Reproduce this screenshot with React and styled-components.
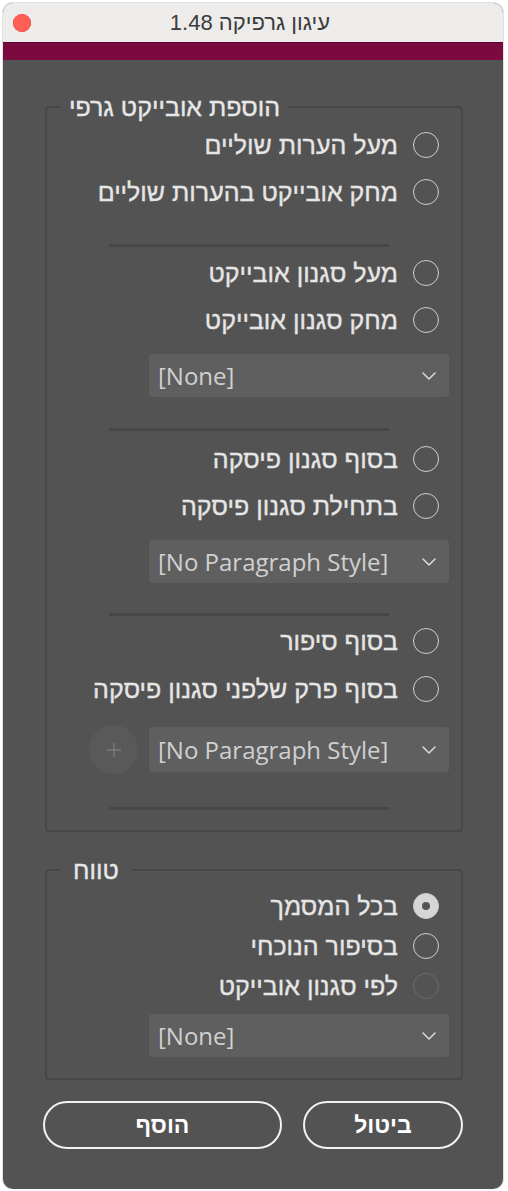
import styled, { createGlobalStyle } from "styled-components";

const GlobalStyle = createGlobalStyle`
  html, body {
    margin: 0;
    background: #ffffff;
  }
`;

const Window = styled.div`
  margin: 3px 0 0 3px;
  width: 500px;
  height: 1186px;
  border-radius: 10px;
  overflow: hidden;
  background: #535353;
  box-shadow: 0 0 0 1px rgba(0, 0, 0, 0.12);
  display: flex;
  flex-direction: column;
  font-family: "Liberation Sans", Arial, sans-serif;
`;

const TitleBar = styled.div`
  height: 39px;
  background: #eeecea;
  display: grid;
  grid-template-columns: 40px 1fr 46px;
  align-items: center;
`;

const CloseDot = styled.span`
  width: 18px;
  height: 18px;
  margin-left: 10px;
  border-radius: 50%;
  background: #fe5f57;
  box-shadow: inset 0 0 0 0.5px #e2463f;
`;

const Title = styled.div`
  text-align: center;
  font-size: 22px;
  color: #3b3b3b;
`;

const AccentBar = styled.div`
  height: 18px;
  box-sizing: border-box;
  background: #7b0a3f;
  border-top: 1px solid #5b0630;
`;

const Content = styled.div`
  padding: 35px 40px 0 42px;
  display: flex;
  flex-direction: column;
`;

const Group = styled.fieldset`
  margin: ${(p) => p.$top || 0}px 0 0;
  padding: 0;
  border: 2px solid #474747;
  border-radius: 4px;
  min-inline-size: auto;
`;

const Legend = styled.legend`
  margin-left: 14px;
  padding: 0 ${(p) => p.$pad || 8}px;
  line-height: 24px;
  font-size: 25px;
  color: #e8e8e8;
  -webkit-text-stroke: 0.35px #e8e8e8;
`;

const Inner = styled.div`
  display: flex;
  flex-direction: column;
  padding: ${(p) => p.$pad};
`;

const RadioRow = styled.div`
  height: 40px;
  margin-top: ${(p) => p.$gap || 0}px;
  padding-right: 22px;
  display: flex;
  align-items: center;
  justify-content: flex-end;
  gap: 15px;
`;

const RadioLabel = styled.span`
  font-size: 25px;
  color: #e6e6e6;
  -webkit-text-stroke: 0.35px #e6e6e6;
`;

const Radio = styled.span`
  width: 26px;
  height: 26px;
  box-sizing: border-box;
  border-radius: 50%;
  border: 1.5px solid ${(p) => (p.$disabled ? "#6c6c6c" : "#cfcfcf")};
  background: ${(p) => (p.$checked ? "#d6d6d6" : "transparent")};
  display: flex;
  align-items: center;
  justify-content: center;
  flex-shrink: 0;

  &::after {
    content: "";
    width: 8px;
    height: 8px;
    border-radius: 50%;
    background: ${(p) => (p.$checked ? "#535353" : "transparent")};
  }
`;

const Separator = styled.div`
  width: 280px;
  height: 3px;
  margin: ${(p) => p.$top}px 0 ${(p) => p.$bottom}px 62px;
  background: #474747;
`;

const SelectRow = styled.div`
  margin-top: ${(p) => p.$top}px;
  padding-right: 12px;
  display: flex;
  align-items: center;
  justify-content: flex-end;
  gap: 11px;
`;

const Select = styled.div`
  width: 300px;
  height: ${(p) => p.$h || 43}px;
  box-sizing: border-box;
  padding: 0 13px 0 9px;
  border-radius: 4px;
  background: #5f5f5f;
  display: flex;
  align-items: center;
  justify-content: space-between;
  font-family: "Open Sans", "Noto Sans", sans-serif;
  font-size: 24px;
  color: #d0d0d0;
`;

const PlusButton = styled.div`
  width: 49px;
  height: 49px;
  border-radius: 50%;
  background: #595959;
  display: flex;
  align-items: center;
  justify-content: center;
`;

const ButtonRow = styled.div`
  margin: 21px 0 0 -2px;
  display: flex;
  justify-content: space-between;
`;

const Button = styled.div`
  width: ${(p) => p.$w}px;
  height: 48px;
  box-sizing: border-box;
  border: 2px solid #f2f2f2;
  border-radius: 24px;
  display: flex;
  align-items: center;
  justify-content: center;
  font-size: 23px;
  font-weight: 700;
  color: #ffffff;
`;

const Chevron = () => (
  <svg width="14" height="8" viewBox="0 0 14 8" fill="none">
    <path d="M1 1l6 6 6-6" stroke="#d6d6d6" strokeWidth="1.6" strokeLinecap="round" strokeLinejoin="round" />
  </svg>
);

const Plus = () => (
  <svg width="16" height="16" viewBox="0 0 16 16" fill="none">
    <path d="M8 1v14M1 8h14" stroke="#7a7a7a" strokeWidth="1.5" />
  </svg>
);

const Option = ({ label, gap, checked, disabled }) => (
  <RadioRow $gap={gap}>
    <RadioLabel dir="rtl">{label}</RadioLabel>
    <Radio $checked={checked} $disabled={disabled} />
  </RadioRow>
);

const Dropdown = ({ value, top, plus, h }) => (
  <SelectRow $top={top}>
    {plus && (
      <PlusButton>
        <Plus />
      </PlusButton>
    )}
    <Select $h={h}>
      <span>{value}</span>
      <Chevron />
    </Select>
  </SelectRow>
);

export default function App() {
  return (
    <>
      <GlobalStyle />
      <Window>
        <TitleBar>
          <CloseDot />
          <Title dir="rtl">עיגון גרפיקה 1.48</Title>
          <span />
        </TitleBar>
        <AccentBar />
        <Content>
          <Group>
            <Legend dir="rtl">הוספת אובייקט גרפי</Legend>
            <Inner $pad="6px 0 20px 0">
              <Option label="מעל הערות שוליים" />
              <Option label="מחק אובייקט בהערות שוליים" gap={7} />
              <Separator $top={32} $bottom={6} />
              <Option label="מעל סגנון אובייקט" />
              <Option label="מחק סגנון אובייקט" gap={7} />
              <Dropdown value="[None]" top={14} />
              <Separator $top={31} $bottom={8} />
              <Option label="בסוף סגנון פיסקה" />
              <Option label="בתחילת סגנון פיסקה" gap={7} />
              <Dropdown value="[No Paragraph Style]" top={14} />
              <Separator $top={30} $bottom={5} />
              <Option label="בסוף סיפור" />
              <Option label="בסוף פרק שלפני סגנון פיסקה" gap={8} />
              <Dropdown value="[No Paragraph Style]" top={16} h={45} plus />
              <Separator $top={33} $bottom={0} />
            </Inner>
          </Group>
          <Group $top={26}>
            <Legend dir="rtl" $pad={12}>טווח</Legend>
            <Inner $pad="4px 0 21px 0">
              <Option label="בכל המסמך" checked />
              <Option label="בסיפור הנוכחי" />
              <Option label="לפי סגנון אובייקט" disabled />
              <Dropdown value="[None]" top={8} />
            </Inner>
          </Group>
          <ButtonRow>
            <Button $w={239} dir="rtl">הוסף</Button>
            <Button $w={160} dir="rtl">ביטול</Button>
          </ButtonRow>
        </Content>
      </Window>
    </>
  );
}
